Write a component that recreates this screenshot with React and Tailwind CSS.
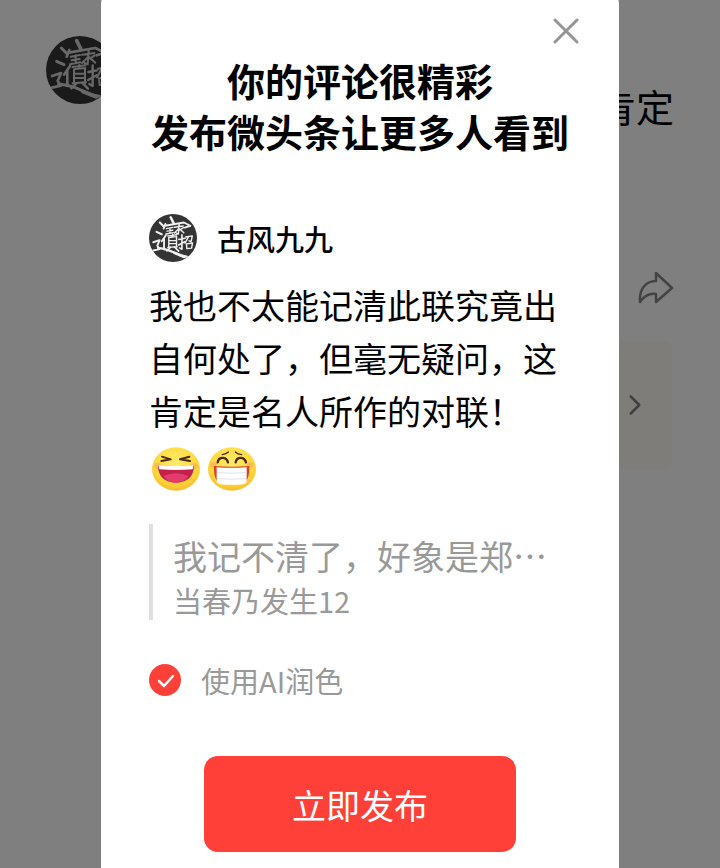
import { ChevronRight } from 'lucide-react';

const comment = {
  author: '古风九九',
  text: '我也不太能记清此联究竟出自何处了，但毫无疑问，这肯定是名人所作的对联！',
};

const quote = {
  text: '我记不清了，好象是郑…',
  author: '当春乃发生12',
};

function Avatar({ className }) {
  return (
    <svg viewBox="50 48 204 204" className={className} role="img" aria-label={comment.author}>
      <circle cx="152" cy="150" r="102" fill="#343434" />
      <g fill="none" stroke="currentColor" strokeWidth="6" strokeLinecap="round" strokeLinejoin="round">
        <path d="M142 62l12 24" strokeWidth="11" />
        <path d="M120 90l-8 20M118 98l80-14 28 14-24 8" strokeWidth="8" />
        <path d="M96 84l18 18M82 124l22 10" strokeWidth="9" />
        <path d="M124 110l28-5M127 121l24-4M122 133l31-6M139 106v22" />
        <path d="M158 104l37-5M178 91l-3 42-9-4M175 112l-17 17M178 110l20 18M196 106l-14 10" />
        <path d="M122 138l-18 26M114 152v46" strokeWidth="8" />
        <path d="M130 141l38-5M134 148v42M167 143v48M134 148l32-4M136 161h28M136 174h28M130 190l40-3M150 134v12" />
        <path d="M141 190l-15 15M158 188l18 18" strokeWidth="7" />
        <path d="M190 136v62l-10-6M177 156l26-5M176 180l26-14" strokeWidth="7" />
        <path d="M206 146l28-5-5 24-9-3M217 146l-14 26M209 175l2 20 20-2 4-22z" />
        <path d="M68 168l27-9-10 24 10 14-27 6" strokeWidth="8" />
        <path d="M88 192c36 3 60 14 94 32l28 5" strokeWidth="9" />
        <path d="M160 214l40 16" strokeWidth="12" />
      </g>
    </svg>
  );
}

function FaceBase({ id }) {
  return (
    <>
      <defs>
        <radialGradient id={id} cx="50%" cy="35%" r="70%">
          <stop offset="0" stopColor="#ffeb6b" />
          <stop offset="0.65" stopColor="#ffd93b" />
          <stop offset="1" stopColor="#f7b52a" />
        </radialGradient>
      </defs>
      <ellipse cx="72" cy="65" rx="72" ry="65" fill={`url(#${id})`} />
    </>
  );
}

function LaughFace() {
  return (
    <svg viewBox="0 0 144 130" className="h-11 w-12" role="img" aria-label="大笑">
      <FaceBase id="laugh" />
      <ellipse cx="18" cy="56" rx="12" ry="9" fill="#fba65a" opacity="0.6" />
      <ellipse cx="126" cy="56" rx="12" ry="9" fill="#fba65a" opacity="0.6" />
      <path
        d="M30 28l26 8-28 5M112 28l-28 8 30 5"
        fill="none"
        stroke="#4a2a10"
        strokeWidth="6"
        strokeLinecap="round"
        strokeLinejoin="round"
      />
      <path d="M18 54q54 4 108 0c0 34-20 52-54 52S18 88 18 54z" fill="#c51f4b" />
      <path d="M34 86q38-16 76 0c-9 13-21 20-38 20s-29-7-38-20z" fill="#e23c6c" />
      <path d="M19 53q53 4 106 0l-3 13q-50 4-100 0z" fill="#fff" />
    </svg>
  );
}

function GrinFace() {
  return (
    <svg viewBox="0 0 144 130" className="h-11 w-12" role="img" aria-label="呲牙">
      <FaceBase id="grin" />
      <ellipse cx="17" cy="52" rx="10" ry="8" fill="#fba65a" opacity="0.6" />
      <ellipse cx="127" cy="52" rx="10" ry="8" fill="#fba65a" opacity="0.6" />
      <g fill="none" stroke="#4a2a10" strokeLinecap="round">
        <path d="M29 45c3-18 26-18 31 0M83 45c3-18 26-18 31 0" strokeWidth="7" />
        <path d="M43 22q12-2 18-8M82 14q7 7 19 8" strokeWidth="4" />
      </g>
      <path d="M18 56q52 5 106 0c2 28-8 50-18 54H36c-10-4-20-26-18-54z" fill="#d8432f" />
      <path d="M26 60q45 3 90 0v42c0 5-4 8-10 9q-35 3-70 0c-6-1-10-4-10-9z" fill="#fff" />
      <path d="M27 76q44 3 88 0M27 94q44 3 88 0" fill="none" stroke="#dfe1e6" strokeWidth="3" />
    </svg>
  );
}

function ShareIcon() {
  return (
    <svg
      viewBox="0 0 36 34"
      className="h-[34px] w-9"
      fill="none"
      stroke="#868686"
      strokeWidth="2.5"
      strokeLinejoin="round"
      aria-hidden="true"
    >
      <path d="M18 2l16 15-16 14v-8C11 22 6 25 2 31 1 19 7 10 18 10z" />
    </svg>
  );
}

function Post() {
  return (
    <div className="flex min-h-screen items-start bg-white px-[46px] pt-9">
      <Avatar className="size-[68px] shrink-0 text-[#d0d0d0]" />
      <div className="flex grow flex-col items-end">
        <p className="pt-11 text-[38px] leading-[51px]">肯定</p>
        <button type="button" aria-label="分享" className="mt-[140px]">
          <ShareIcon />
        </button>
        <div className="mt-9 w-full pr-0.5">
          <a
            href="#article"
            aria-label="查看原文"
            className="flex h-32 items-center justify-end rounded-lg bg-[#fffbf2] pr-5"
          >
            <ChevronRight size={34} strokeWidth={1.75} className="text-[#808080]" />
          </a>
        </div>
      </div>
    </div>
  );
}

function PublishDialog() {
  return (
    <div
      role="dialog"
      aria-modal="true"
      aria-labelledby="dialog-title"
      className="-mt-2 flex w-full max-w-[518px] flex-col rounded-t-xl bg-white px-12 pt-6 pb-4"
    >
      <button type="button" aria-label="关闭" className="-mr-2 self-end">
        <svg viewBox="0 0 26 30" className="h-[30px] w-[26px]" stroke="#959595" strokeWidth="3" strokeLinecap="round">
          <path d="M2 4l22 22M24 4L2 26" />
        </svg>
      </button>

      <h1 id="dialog-title" className="mt-2 text-center text-[38px] leading-[51px] font-bold whitespace-nowrap">
        你的评论很精彩
        <br />
        发布微头条让更多人看到
      </h1>

      <div className="mt-[58px] flex items-center gap-5">
        <Avatar className="size-12 text-[#f0f0f0]" />
        <span className="text-[29px] leading-[48px] font-medium">{comment.author}</span>
      </div>
      <p className="mt-4 text-[34px] leading-[53px]">{comment.text}</p>
      <div className="mt-2.5 flex gap-2 pl-[3px]">
        <LaughFace />
        <GrinFace />
      </div>

      <blockquote className="mt-[33px] border-l-4 border-[#e0e0e0] pt-2 pl-5 text-[#999]">
        <p className="truncate text-[34px] leading-[48px]">{quote.text}</p>
        <cite className="block text-[29px] leading-[40px] not-italic">{quote.author}</cite>
      </blockquote>

      <label className="mt-10 flex items-center gap-5 text-[29px] leading-[40px] text-[#999]">
        <span className="relative size-8">
          <input
            type="checkbox"
            defaultChecked
            className="peer block size-8 appearance-none rounded-full border border-[#ccc] checked:border-0 checked:bg-[#ff4039]"
          />
          <svg
            viewBox="0 0 32 32"
            className="pointer-events-none absolute inset-0 hidden peer-checked:block"
            fill="none"
            stroke="#fff"
            strokeWidth="2.5"
            strokeLinecap="round"
            strokeLinejoin="round"
          >
            <path d="M10 17l5 5 9-10" />
          </svg>
        </span>
        使用AI润色
      </label>

      <button
        type="button"
        className="mt-14 h-24 w-[312px] self-center rounded-[14px] bg-[#ff4039] text-[34px] text-white"
      >
        立即发布
      </button>
    </div>
  );
}

export default function App() {
  return (
    <div lang="zh-CN" className="relative overflow-hidden font-['Noto_Sans_CJK_SC',sans-serif] text-black">
      <Post />
      <div className="absolute inset-0 flex justify-center bg-black/50">
        <PublishDialog />
      </div>
    </div>
  );
}
